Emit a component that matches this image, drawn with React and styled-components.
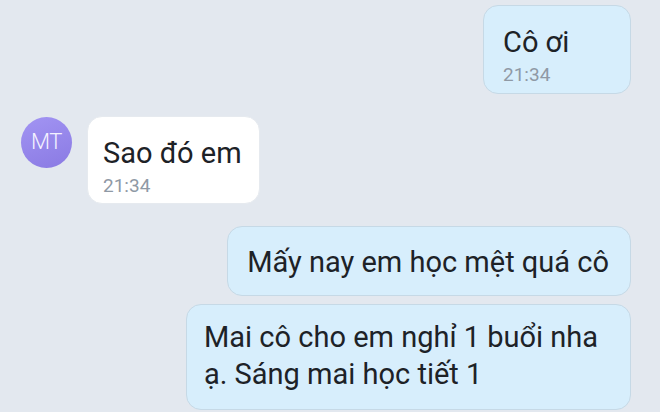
import React from "react";
import styled, { createGlobalStyle } from "styled-components";

const Global = createGlobalStyle`
  html, body { margin: 0; padding: 0; }
  body {
    width: 660px;
    height: 412px;
    overflow: hidden;
    background: #e3e8ef;
    font-family: Roboto, "Noto Sans", "Liberation Sans", sans-serif;
    -webkit-font-smoothing: antialiased;
  }
`;

const Chat = styled.div`
  display: flex;
  flex-direction: column;
  padding: 5px 28px 0 21px;
  height: 412px;
  box-sizing: border-box;
`;

const Row = styled.div`
  display: flex;
  justify-content: ${(p) => (p.$mine ? "flex-end" : "flex-start")};
  align-items: flex-start;
  gap: 15px;
  margin-top: ${(p) => p.$mt || 0}px;
`;

const Avatar = styled.div`
  width: 51px;
  height: 51px;
  border-radius: 50%;
  margin-top: 1px;
  background: linear-gradient(160deg, #a294f3 0%, #8a7ae3 100%);
  color: #f4f2ff;
  display: flex;
  align-items: center;
  justify-content: center;
  font-size: 22px;
  font-weight: 300;
  letter-spacing: -0.5px;
  padding-bottom: 3px;
  box-sizing: border-box;
  flex-shrink: 0;
`;

const Bubble = styled.div`
  box-sizing: border-box;
  border-radius: 15px;
  border: 1px solid ${(p) => (p.$mine ? "#c6d9e6" : "#e6eaef")};
  background: ${(p) => (p.$mine ? "#d7eefc" : "#ffffff")};
  padding: ${(p) => p.$pt}px ${(p) => p.$pr}px ${(p) => p.$pb}px ${(p) => p.$pl}px;
  min-width: ${(p) => p.$minW || 0}px;
  max-width: ${(p) => p.$maxW || 600}px;
  margin-right: ${(p) => (p.$mine ? 1 : 0)}px;
`;

const Text = styled.div`
  font-size: 29px;
  line-height: 37px;
  color: #1d2227;
`;

const Time = styled.div`
  font-size: 19px;
  line-height: 24px;
  color: #8f99a5;
  margin-top: 2px;
`;

export default function App() {
  return (
    <>
      <Global />
      <Chat>
        <Row $mine>
          <Bubble $mine $pt={18} $pr={20} $pb={6} $pl={19} $minW={148}>
            <Text>Cô ơi</Text>
            <Time>21:34</Time>
          </Bubble>
        </Row>
        <Row $mt={22}>
          <Avatar>MT</Avatar>
          <Bubble $pt={18} $pr={17} $pb={5} $pl={15}>
            <Text>Sao đó em</Text>
            <Time>21:34</Time>
          </Bubble>
        </Row>
        <Row $mine $mt={22}>
          <Bubble $mine $pt={17} $pr={21} $pb={14} $pl={19}>
            <Text>Mấy nay em học mệt quá cô</Text>
          </Bubble>
        </Row>
        <Row $mine $mt={8}>
          <Bubble $mine $pt={14} $pr={18} $pb={16} $pl={17} $maxW={445}>
            <Text>Mai cô cho em nghỉ 1 buổi nha ạ. Sáng mai học tiết 1</Text>
          </Bubble>
        </Row>
      </Chat>
    </>
  );
}
